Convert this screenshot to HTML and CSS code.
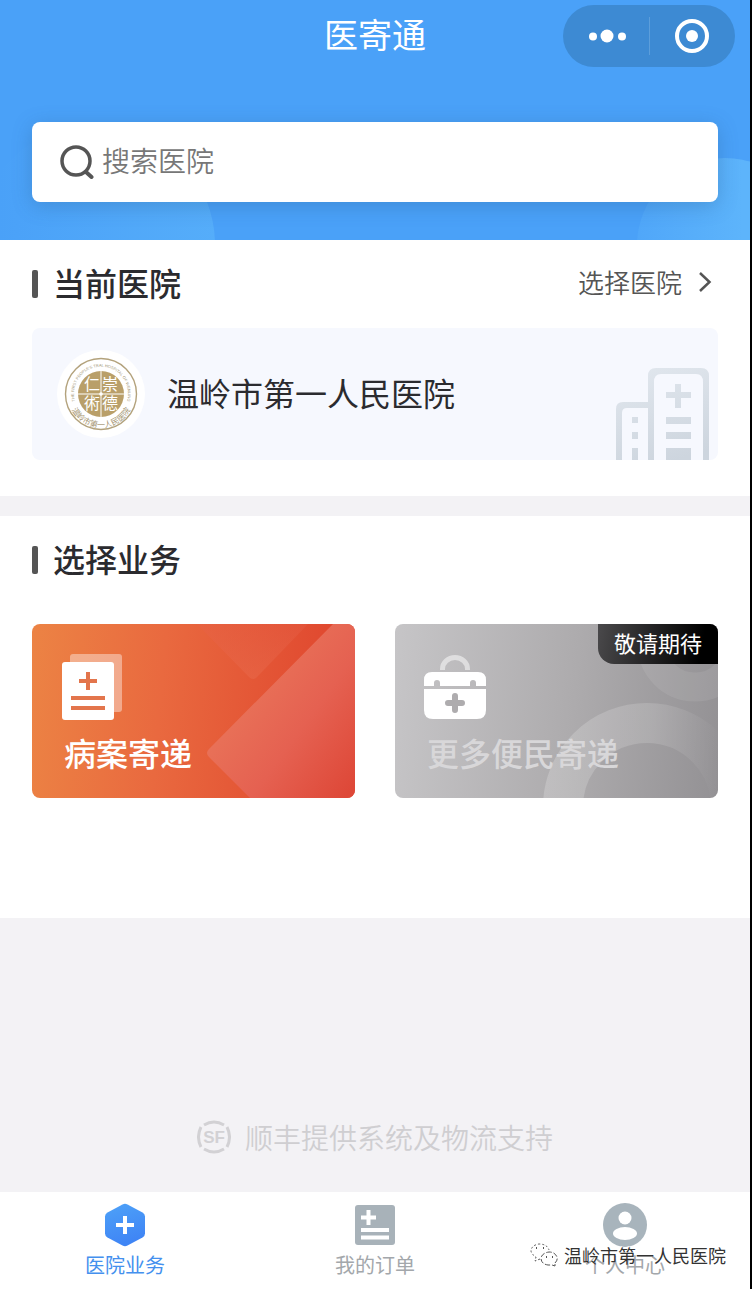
FILE: index.html
```
<!DOCTYPE html>
<html lang="zh-CN">
	<head>
		<meta charset="UTF-8" />
		<meta name="viewport" content="width=device-width, initial-scale=1.0" />
		<title>医寄通</title>
		<link rel="stylesheet" href="styles.css">
	</head>
	<body>
		<header class="header">
			<svg class="bubble bubble-left" viewBox="0 0 240 240" aria-hidden="true">
				<defs>
					<linearGradient id="bubbleA" x1="0" x2="1">
						<stop offset="0.100" stop-color="#58b0fa" stop-opacity="0" />
						<stop offset="1" stop-color="#58b0fa" stop-opacity="0.800" />
					</linearGradient>
				</defs>
				<circle cx="120" cy="120" r="120" fill="url(#bubbleA)" />
			</svg>
			<svg class="bubble bubble-right" viewBox="0 0 176 176" aria-hidden="true">
				<defs>
					<linearGradient id="bubbleB" x1="0" x2="1">
						<stop offset="0" stop-color="#5db4fb" stop-opacity="0.300" />
						<stop offset="0.600" stop-color="#5db4fb" />
					</linearGradient>
				</defs>
				<circle cx="88" cy="88" r="88" fill="url(#bubbleB)" />
			</svg>
			<div class="navbar">
				<h1 class="nav-title">医寄通</h1>
				<div class="capsule">
					<button class="capsule-btn" type="button" aria-label="更多">
						<svg width="40" height="14" viewBox="0 0 40 14" fill="#fff">
							<circle cx="7" cy="7.500" r="4" />
							<circle cx="21" cy="7" r="6.500" />
							<circle cx="36" cy="7.500" r="4" />
						</svg>
					</button>
					<button class="capsule-btn" type="button" aria-label="关闭">
						<svg width="34" height="34" viewBox="0 0 34 34">
							<circle cx="17" cy="17" r="15" fill="none" stroke="#fff" stroke-width="4" />
							<circle cx="17" cy="17" r="6" fill="#fff" />
						</svg>
					</button>
				</div>
			</div>
			<label class="search">
				<svg width="34" height="34" viewBox="0 0 34 34" fill="none" stroke="#555" aria-hidden="true">
					<circle cx="16" cy="16" r="14" stroke-width="3.500" />
					<path d="M26 27l5.500 5" stroke-width="4" stroke-linecap="round" />
				</svg>
				<input class="search-input" type="text" placeholder="搜索医院" aria-label="搜索医院" />
			</label>
		</header>

		<main class="main">
			<section class="section">
				<div class="section-head">
					<h2 class="section-title">当前医院</h2>
					<a class="choose" href="#">
						选择医院
						<svg width="14" height="22" viewBox="0 0 14 22" fill="none" stroke="#555" stroke-width="2.500" aria-hidden="true">
							<path d="M2 2l9.500 9L2 20" />
						</svg>
					</a>
				</div>
				<div class="hospital">
					<!-- hospital seal -->
					<svg class="hospital-logo" viewBox="0 0 88 88" role="img" aria-label="医院徽标">
						<defs>
							<path id="arcTop" d="M19 54A27 27 0 1 1 69 54" />
							<path id="arcBottom" d="M13 56A33 33 0 0 0 75 56" />
						</defs>
						<circle cx="44" cy="44" r="44" fill="#fff" />
						<circle cx="44" cy="44" r="35.500" fill="none" stroke="#b3a27c" stroke-width="1.400" />
						<circle cx="44" cy="44" r="23" fill="#b99f69" />
						<path d="M44 21v46M21 44h46" stroke="#fff" stroke-width="1" />
						<circle cx="44" cy="44" r="1.800" fill="#fff" />
						<g class="seal-text">
							<text x="35" y="40">仁</text>
							<text x="53" y="40">崇</text>
							<text x="35" y="59">術</text>
							<text x="53" y="59">德</text>
						</g>
						<text class="seal-en"><textPath href="#arcTop" startOffset="50%">THE FIRST PEOPLE'S TRAL HOSPITAL OF WENLING</textPath></text>
						<text class="seal-cn"><textPath href="#arcBottom" startOffset="50%">温岭市第一人民医院</textPath></text>
					</svg>
					<span class="hospital-name">温岭市第一人民医院</span>
					<svg class="hospital-art" width="94" height="92" viewBox="0 0 94 92" aria-hidden="true">
						<defs>
							<linearGradient id="building" gradientUnits="userSpaceOnUse" x1="30" y1="0" x2="60" y2="92">
								<stop offset="0" stop-color="#e0e6ed" />
								<stop offset="1" stop-color="#cdd5de" />
							</linearGradient>
						</defs>
						<g fill="url(#building)">
							<path d="M32 92V8q0-8 8-8h45q8 0 8 8v84h-6V14q0-8-7-8H45q-7 0-7 8v78z" />
							<path d="M0 92V41q0-7 7-7h25v6H11q-5 0-5 5v47z" />
							<path d="M59 16h6v8h10v6H65v10h-6V30h-9v-6h9zM50 49h25v7H50zM50 64h25v7H50zM50 80h25v12H50z" />
							<path d="M16 49h6v6h-6zM16 64h6v7h-6zM16 80h6v12h-6z" />
						</g>
					</svg>
				</div>
			</section>

			<section class="section section-services">
				<div class="section-head">
					<h2 class="section-title">选择业务</h2>
				</div>
				<div class="services">
					<button class="card card-record" type="button">
						<svg class="card-art" viewBox="0 0 323 174" preserveAspectRatio="xMaxYMid slice" aria-hidden="true">
							<defs>
								<linearGradient id="diamond" gradientUnits="userSpaceOnUse" x1="200" y1="70" x2="323" y2="160">
									<stop offset="0" stop-color="#e97459" />
									<stop offset="0.500" stop-color="#e56151" />
									<stop offset="1" stop-color="#de4838" />
								</linearGradient>
								<linearGradient id="notch" x1="0" y1="0" x2="0" y2="1">
									<stop offset="0" stop-color="#e6614a" stop-opacity="0.300" />
									<stop offset="1" stop-color="#e86a4c" stop-opacity="0.500" />
								</linearGradient>
							</defs>
							<path d="M165 0h111l-51 53q-4 4-8 0z" fill="url(#notch)" />
							<path d="M301 0h22v174H218l-41-41q-4-4 0-8z" fill="url(#diamond)" />
						</svg>
						<svg class="card-icon" width="64" height="66" viewBox="0 0 64 66" aria-hidden="true">
							<rect x="9" width="52" height="58" rx="3" fill="#fff" fill-opacity="0.400" />
							<rect x="1" y="8" width="52" height="58" rx="3" fill="#fff" />
							<path d="M25 18h4v7h7v4h-7v7h-4v-7h-7v-4h7zM10 42h34v4H10zM10 52h34v4H10z" fill="#e3754c" />
						</svg>
						<span class="card-label">病案寄递</span>
					</button>
					<button class="card card-more" type="button" disabled>
						<svg class="card-art" viewBox="0 0 323 174" preserveAspectRatio="xMaxYMid slice" aria-hidden="true">
							<defs>
								<linearGradient id="ring" gradientUnits="userSpaceOnUse" x1="150" y1="120" x2="325" y2="130">
									<stop offset="0" stop-color="#fff" stop-opacity="0.200" />
									<stop offset="0.600" stop-color="#fff" stop-opacity="0.150" />
									<stop offset="1" stop-color="#fff" stop-opacity="0" />
								</linearGradient>
							</defs>
							<circle cx="252" cy="183" r="84" fill="none" stroke="url(#ring)" stroke-width="40" />
							<circle cx="300" cy="20" r="43" fill="none" stroke="#fff" stroke-opacity="0.080" stroke-width="29" />
						</svg>
						<svg class="card-icon" width="64" height="66" viewBox="0 0 64 66" aria-hidden="true">
							<path d="M18.500 16v-1a12.500 11.500 0 0 1 25 0v1" fill="none" stroke="#fff" stroke-opacity="0.500" stroke-width="5" />
							<path d="M0 32V26q0-8 8-8h46q8 0 8 8v6H52v-3a3 3 0 0 0-6 0v3H16v-3a3 3 0 0 0-6 0v3z" fill="#fff" />
							<path d="M0 35h62v21q0 9-9 9H9q-9 0-9-9z" fill="#fff" />
							<path d="M31 42v14M24 49h14" stroke="#aeacae" stroke-width="6" stroke-linecap="round" />
						</svg>
						<span class="card-label">更多便民寄递</span>
						<span class="badge">敬请期待</span>
					</button>
				</div>
			</section>

			<p class="support">
				<svg width="34" height="34" viewBox="0 0 34 34" aria-hidden="true">
					<g fill="none" stroke="#d2d1d4" stroke-width="3">
						<path d="M7 5q10-6 20 0M7 29q10 6 20 0M4 7q-5 10 0 20M30 7q5 10 0 20" />
					</g>
					<text class="sf" x="17" y="23">SF</text>
				</svg>
				顺丰提供系统及物流支持
			</p>
		</main>

		<nav class="tabbar">
			<a class="tab tab-active" href="#">
				<svg width="44" height="44" viewBox="0 0 44 44" aria-hidden="true">
					<defs>
						<linearGradient id="hex" x1="0" y1="0" x2="0.300" y2="1">
							<stop offset="0" stop-color="#4ea2f8" />
							<stop offset="1" stop-color="#3f85f5" />
						</linearGradient>
					</defs>
					<path d="M19.500 1.500q2.500-1.300 5 0l15 8q2.500 1.500 2.500 4v17q0 2.500-2.500 4l-15 8q-2.500 1.300-5 0l-15-8Q2 33 2 30.500v-17Q2 11 4.500 9.500z" fill="url(#hex)" />
					<path d="M22 13v18M13 22h18" stroke="#fff" stroke-width="4" />
				</svg>
				医院业务
			</a>
			<a class="tab" href="#">
				<svg width="44" height="44" viewBox="0 0 44 44" aria-hidden="true">
					<rect x="2" y="2" width="40" height="40" rx="3" fill="#a8b2b9" />
					<path d="M15.500 7v15M8 14.500h15" stroke="#fff" stroke-width="4" />
					<path d="M8 27h28M8 34.500h28" stroke="#fff" stroke-width="4" />
				</svg>
				我的订单
			</a>
			<a class="tab" href="#">
				<svg width="44" height="44" viewBox="0 0 44 44" aria-hidden="true">
					<circle cx="22" cy="22" r="22" fill="#a8b4bc" />
					<circle cx="22" cy="15" r="6.500" fill="#fff" />
					<ellipse cx="22" cy="30.500" rx="12" ry="6.500" fill="#fff" />
				</svg>
				个人中心
			</a>
			<div class="watermark">
				<svg width="28" height="24" viewBox="0 0 28 24" fill="none" stroke="#555" aria-hidden="true">
					<path d="M10 16l-5 2 1-4Q1 11 1 7.500 2 2 9 1q8 0 10 6" stroke-dasharray="2 2" />
					<path d="M25 20q3-3 2-6-2-5-8-5-7 1-8 6 0 6 7 7h4l3 1z" fill="#fff" stroke-dasharray="5 2" />
					<path d="M6 5h1M13 5h1M16 14h1M22 14h1" stroke-width="2" />
				</svg>
				温岭市第一人民医院
			</div>
		</nav>
	</body>
</html>
```
FILE: styles.css
```
* {
	box-sizing: border-box;
}
body {
	display: flex;
	flex-direction: column;
	min-height: 100vh;
	margin: 0;
	border-right: 2px solid #000;
	background: #f3f2f5;
	color: #2b2b2f;
	font-family: "Noto Sans CJK SC", sans-serif;
}
h1,
h2,
p {
	margin: 0;
}
a {
	color: inherit;
	text-decoration: none;
}
button {
	padding: 0;
	border: 0;
	background: none;
	font-family: inherit;
	cursor: pointer;
}
svg {
	flex-shrink: 0;
}

/* header */
.header {
	position: relative;
	overflow: hidden;
	padding: 0 32px 38px;
	background: #4aa1f8;
}
.bubble {
	position: absolute;
}
.bubble-left {
	left: -25px;
	bottom: -125px;
	width: 240px;
}
.bubble-right {
	right: -63px;
	bottom: -94px;
	width: 176px;
}
.navbar {
	display: grid;
	grid-template-columns: 1fr auto 1fr;
	align-items: center;
	height: 72px;
	margin: 0 -17px 50px;
}
.nav-title {
	grid-column: 2;
	padding-bottom: 4px;
	color: #fff;
	font-size: 34px;
	font-weight: 400;
	line-height: 48px;
}
.capsule {
	display: flex;
	justify-self: end;
	width: 172px;
	height: 62px;
	border-radius: 31px;
	background: #3d8ad3;
}
.capsule-btn {
	display: flex;
	flex: 1;
	align-items: center;
	justify-content: center;
}
.capsule-btn + .capsule-btn::before {
	position: absolute;
	width: 1px;
	height: 38px;
	margin-right: 86px;
	background: #5c9edb;
	content: "";
}
.search {
	position: relative;
	display: flex;
	align-items: center;
	gap: 8px;
	height: 80px;
	padding: 0 28px;
	border-radius: 8px;
	background: #fff;
	box-shadow: 0 4px 20px rgba(40, 90, 140, 0.3);
}
.search-input {
	flex: 1;
	min-width: 0;
	padding: 0 0 4px;
	border: 0;
	outline: 0;
	background: none;
	color: #333;
	font-family: inherit;
	font-size: 28px;
	font-weight: 350;
	line-height: 40px;
}
.search-input::placeholder {
	color: #777;
	opacity: 1;
}

/* sections */
.main {
	display: flex;
	flex: 1;
	flex-direction: column;
	gap: 20px;
}
.section {
	padding: 20px 32px 36px;
	background: #fff;
}
.section-services {
	padding-bottom: 120px;
}
.section-head {
	display: flex;
	align-items: center;
	justify-content: space-between;
	margin-bottom: 24px;
}
.section-services .section-head {
	margin-bottom: 44px;
}
.section-title {
	display: flex;
	align-items: center;
	gap: 15px;
	font-size: 32px;
	font-weight: 500;
	line-height: 44px;
}
.section-title::before {
	width: 6px;
	height: 28px;
	margin-top: 4px;
	border-radius: 2px;
	background: #555;
	content: "";
}
.choose {
	display: flex;
	align-items: center;
	gap: 16px;
	padding-right: 6px;
	color: #555;
	font-size: 26px;
	font-weight: 350;
	line-height: 40px;
}

/* current hospital */
.hospital {
	position: relative;
	display: flex;
	align-items: center;
	gap: 22px;
	height: 132px;
	padding: 0 25px;
	border-radius: 8px;
	background: #f6f8fe;
}
.hospital-logo {
	width: 88px;
	height: 88px;
}
.hospital-name {
	padding-bottom: 4px;
	font-size: 32px;
	line-height: 48px;
}
.hospital-art {
	position: absolute;
	right: 8px;
	bottom: 0;
}
.seal-text {
	fill: #fff;
	font-size: 16px;
	text-anchor: middle;
}
.seal-en {
	fill: #a39878;
	font-family: "Liberation Sans", sans-serif;
	font-size: 4px;
	text-anchor: middle;
}
.seal-cn {
	fill: #a39370;
	font-size: 8px;
	text-anchor: middle;
}

/* service cards */
.services {
	display: grid;
	grid-template-columns: 1fr 1fr;
	gap: 40px;
}
.card {
	position: relative;
	display: flex;
	flex-direction: column;
	align-items: flex-start;
	gap: 12px;
	overflow: hidden;
	height: 174px;
	padding: 30px 29px 0;
	border-radius: 8px;
	color: #fff;
}
.card-record {
	background: linear-gradient(95deg, #ec8344, #e9693f 40%, #e0482f 90%);
}
.card-more {
	background: linear-gradient(95deg, #c6c5c7, #adabad 55%, #939194);
	cursor: default;
}
.card-art {
	position: absolute;
	top: 0;
	left: 0;
	width: 100%;
	height: 100%;
}
.card-icon,
.card-label {
	position: relative;
}
.card-label {
	padding-left: 3px;
	font-size: 32px;
	font-weight: 500;
	line-height: 40px;
}
.card-more .card-label {
	color: #d8d7d9;
}
.badge {
	position: absolute;
	top: 0;
	right: 0;
	padding: 0 16px 4px;
	border-bottom-left-radius: 16px;
	background: linear-gradient(100deg, #4a494b, #000 85%);
	color: #fff;
	font-size: 22px;
	line-height: 36px;
}

.support {
	display: flex;
	flex: 1;
	align-items: flex-end;
	justify-content: center;
	gap: 14px;
	padding-bottom: 35px;
	color: #cfced1;
	font-size: 28px;
	font-weight: 350;
	line-height: 40px;
}
.support svg {
	margin-bottom: 3px;
}
.sf {
	fill: #d2d1d4;
	font-family: "Liberation Sans", sans-serif;
	font-size: 17px;
	font-weight: bold;
	text-anchor: middle;
}

/* bottom tabs */
.tabbar {
	position: relative;
	display: flex;
	height: 97px;
	padding-top: 11px;
	background: #fff;
}
.tab {
	display: flex;
	flex: 1;
	flex-direction: column;
	align-items: center;
	gap: 4px;
	color: #a3a7ab;
	font-size: 20px;
	line-height: 28px;
}
.tab-active {
	color: #4490ee;
}
.watermark {
	position: absolute;
	right: 24px;
	bottom: 20px;
	display: flex;
	align-items: center;
	gap: 6px;
	color: #333;
	font-size: 18px;
	line-height: 28px;
	text-shadow: -1px -1px 0 #fff;
}
```
